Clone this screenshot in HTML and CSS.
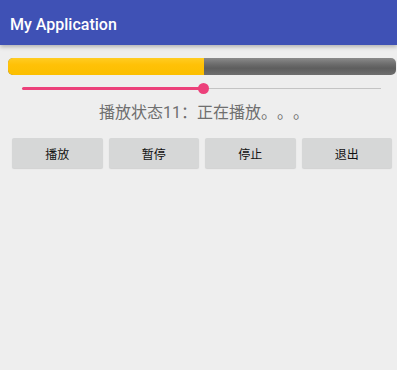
FILE: index.html
```html
<!DOCTYPE html>
<html lang="zh">
<head>
  <meta charset="UTF-8">
  <meta name="viewport" content="width=device-width, initial-scale=1.0">
  <title>My Application</title>
  <link rel="stylesheet" href="styles.css">
</head>
<body>
  <div class="app-bar">My Application</div>

  <div class="content">
    <div class="progress">
      <div class="progress-fill" style="width: 50.6%;"></div>
    </div>

    <div class="seekbar">
      <div class="seek-track">
        <div class="seek-fill" style="width: 50.3%;"></div>
        <div class="seek-thumb" style="left: 50.3%;"></div>
      </div>
    </div>

    <div class="status">播放状态11：正在播放。。。</div>

    <div class="actions">
      <button>播放</button>
      <button>暂停</button>
      <button>停止</button>
      <button>退出</button>
    </div>
  </div>
</body>
</html>
```

FILE: styles.css
```css
body {
  margin: 0;
  width: 397px;
  height: 370px;
  background-color: #eeeeee;
  font-family: Roboto, "Noto Sans CJK SC", sans-serif;
  overflow: hidden;
}
.app-bar {
  height: 45px;
  box-sizing: border-box;
  padding: 15px 0 0 10px;
  background-color: #3f51b5;
  color: #fff;
  font-size: 16px;
  font-weight: 500;
  box-shadow: 0 2px 4px rgba(0, 0, 0, 0.25);
  position: relative;
}
.content {
  padding: 13px 1px 0 8px;
}
.progress {
  height: 17px;
  border-radius: 5px;
  overflow: hidden;
  background: linear-gradient(#8a8a8a, #6a6a6a 40%, #5e5e5e 60%, #6f6f6f);
}
.progress-fill {
  height: 100%;
  background: linear-gradient(#ffcc22, #ffc107 40%, #fbbf00);
}
.seekbar {
  padding: 0 15px 0 14px;
  height: 26px;
  display: flex;
  align-items: center;
}
.seek-track {
  position: relative;
  flex: 1;
  height: 1px;
  background-color: #c4c4c4;
}
.seek-fill {
  position: absolute;
  left: 0;
  top: -1px;
  height: 3px;
  border-radius: 2px;
  background-color: #ec407a;
}
.seek-thumb {
  position: absolute;
  top: -5px;
  width: 11px;
  height: 11px;
  margin-left: -5px;
  border-radius: 50%;
  background-color: #ec407a;
}
.status {
  text-align: center;
  color: #6f6f6f;
  font-size: 16px;
  line-height: 24px;
  padding-left: 4px;
  text-spacing-trim: space-all;
}
.actions {
  display: grid;
  grid-template-columns: repeat(4, 1fr);
  gap: 6px;
  padding: 13px 4px 0 4px;
}
button {
  height: 30px;
  border: none;
  border-radius: 2px;
  background-color: #d6d7d7;
  color: #111;
  font-family: Roboto, "Noto Sans CJK SC", sans-serif;
  font-size: 12px;
  box-shadow: 0 1px 1px rgba(0, 0, 0, 0.12);
  padding: 0;
}
```
